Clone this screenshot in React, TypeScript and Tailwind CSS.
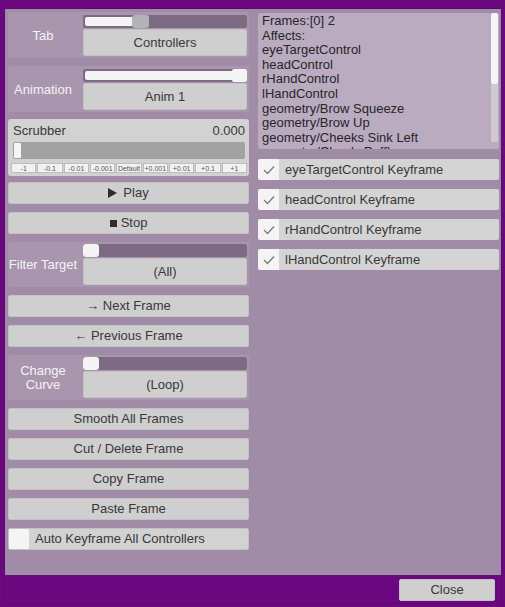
import type { ReactNode } from "react";

const font = "font-['Liberation_Sans',Arial,sans-serif]";

function Btn({ children, className = "" }: { children: ReactNode; className?: string }) {
	return (
		<div
			className={`h-[22px] w-full flex items-center justify-center bg-[#cfcfcf] rounded-[2px] border border-[#c2c2c2] text-[13px] text-[#383838] ${className}`}
		>
			{children}
		</div>
	);
}

function Slider({ kind }: { kind: "mid" | "full" | "start" }) {
	return (
		<div className="h-[13px] w-full flex items-center bg-[#7d6b84] rounded-[2px]">
			{kind === "mid" && (
				<>
					<div className="ml-[2px] h-[9px] w-[47px] bg-[#f4f4f4] rounded-l-[2px]"></div>
					<div className="h-[13px] w-[17px] bg-[#b3b3b3] rounded-[3px]"></div>
				</>
			)}
			{kind === "full" && (
				<>
					<div className="ml-[2px] h-[9px] flex-1 bg-[#f4f4f4] rounded-l-[2px]"></div>
					<div className="h-[13px] w-[15px] bg-[#f4f4f4] rounded-[2px]"></div>
				</>
			)}
			{kind === "start" && <div className="h-[13px] w-[16px] bg-[#f4f4f4] rounded-[3px]"></div>}
		</div>
	);
}

function Group({ label, slider, value, tall = false }: { label: ReactNode; slider: "mid" | "full" | "start"; value: string; tall?: boolean }) {
	return (
		<div className={`w-full flex items-center bg-[#a995ae] rounded-[2px] ${tall ? "h-[46px] pt-[1px]" : "h-[45px]"}`}>
			<div className="w-[70px] text-center text-[13px] leading-[14px] text-[#f4f4f4]">{label}</div>
			<div className="ml-[5px] w-[164px] flex flex-col">
				<Slider kind={slider} />
				<div className="mt-[1px] h-[27px] flex items-center justify-center bg-[#cfcfcf] rounded-[2px] border border-[#c2c2c2] text-[13px] text-[#383838]">
					{value}
				</div>
			</div>
		</div>
	);
}

function Check({ checked, label }: { checked: boolean; label: string }) {
	return (
		<div className="h-[21px] w-full flex rounded-[2px] overflow-hidden">
			<div className="w-[21px] h-full bg-[#f4f4f4] flex items-center justify-center">
				{checked && (
					<svg width="12" height="10" viewBox="0 0 12 10">
						<polyline points="1,5 4.5,8.5 11,1.5" fill="none" stroke="#7a7a7a" strokeWidth="1.3" />
					</svg>
				)}
			</div>
			<div className="flex-1 bg-[#d4d4d4] flex items-center pl-[6px] text-[13px] text-[#383838]">{label}</div>
		</div>
	);
}

const steps = ["-1", "-0.1", "-0.01", "-0.001", "Default", "+0.001", "+0.01", "+0.1", "+1"];

const lines = [
	"Frames:[0] 2",
	"Affects:",
	"eyeTargetControl",
	"headControl",
	"rHandControl",
	"lHandControl",
	"geometry/Brow Squeeze",
	"geometry/Brow Up",
	"geometry/Cheeks Sink Left",
	"geometry/CheeksPuffLower",
];

export default function App() {
	return (
		<div className={`w-[505px] h-[607px] bg-[#6b0880] pt-[8px] pl-[4px] ${font}`}>
			<div className="w-[498px] h-[596px] border border-[#5c0871] flex flex-col">
				<div className="h-[566px] bg-[#a18ca8] flex pl-[3px] pt-[3px]">
					{/* Left column */}
					<div className="w-[241px] flex flex-col">
						<Group label="Tab" slider="mid" value="Controllers" tall />
						<div className="mt-[8px]">
							<Group label="Animation" slider="full" value="Anim 1" tall />
						</div>

						{/* Scrubber */}
						<div className="mt-[7px] h-[57px] bg-[#d2d2d2] rounded-[3px] pt-[2px] pl-[5px] pr-[4px] flex flex-col">
							<div className="h-[20px] flex items-center justify-between text-[13px] text-[#383838]">
								<span>Scrubber</span>
								<span>0.000</span>
							</div>
							<div className="mt-[1px] h-[17px] bg-[#a2a2a2] rounded-[2px] flex items-center pl-[1px]">
								<div className="w-[7px] h-[15px] bg-[#f6f6f6] rounded-[1px]"></div>
							</div>
							<div className="mt-[4px] -ml-[2px] -mr-[2px] h-[10px] flex gap-[1px]">
								{steps.map((s) => (
									<div
										key={s}
										className="flex-1 flex items-center justify-center bg-[#f2f2f2] border border-[#bdbdbd] text-[7px] leading-none text-[#555]"
									>
										{s}
									</div>
								))}
							</div>
						</div>

						<Btn className="mt-[6px] gap-[6px]">
							<svg width="9" height="10" viewBox="0 0 9 10">
								<polygon points="0,0 9,5 0,10" fill="#2e2e2e" />
							</svg>
							<span>Play</span>
						</Btn>
						<Btn className="mt-[8px] gap-[4px]">
							<svg width="7" height="7" viewBox="0 0 7 7">
								<rect width="7" height="7" fill="#2e2e2e" />
							</svg>
							<span>Stop</span>
						</Btn>

						<div className="mt-[8px]">
							<Group label="Filter Target" slider="start" value="(All)" />
						</div>
						<Btn className="mt-[8px]">→ Next Frame</Btn>
						<Btn className="mt-[8px]">← Previous Frame</Btn>
						<div className="mt-[8px]">
							<Group
								label={
									<>
										Change
										<br />
										Curve
									</>
								}
								slider="start"
								value="(Loop)"
							/>
						</div>
						<Btn className="mt-[8px]">Smooth All Frames</Btn>
						<Btn className="mt-[8px]">Cut / Delete Frame</Btn>
						<Btn className="mt-[8px]">Copy Frame</Btn>
						<Btn className="mt-[8px]">Paste Frame</Btn>
						<div className="mt-[8px] h-[22px] w-full flex rounded-[2px] overflow-hidden border border-[#c2c2c2]">
							<div className="w-[20px] h-full bg-[#f4f4f4]"></div>
							<div className="flex-1 bg-[#d2d2d2] flex items-center pl-[6px] text-[13px] text-[#383838]">
								Auto Keyframe All Controllers
							</div>
						</div>
					</div>

					{/* Right column */}
					<div className="ml-[9px] w-[241px] flex flex-col">
						<div className="mt-[1px] h-[136px] bg-[#baabc1] rounded-[2px] flex overflow-hidden">
							<div className="flex-1 pl-[4px] pt-[1px] text-[13px] leading-[14.6px] text-[#262626] overflow-hidden">
								{lines.map((l) => (
									<div key={l} className="whitespace-nowrap">
										{l}
									</div>
								))}
							</div>
							<div className="w-[7px] mr-[1px] pb-[7px] flex flex-col">
								<div className="h-[71px] bg-[#f6f6f6] rounded-[2px]"></div>
								<div className="flex-1 bg-[#d0c9d3]"></div>
							</div>
						</div>
						<div className="mt-[10px] flex flex-col gap-[9px]">
							<Check checked label="eyeTargetControl Keyframe" />
							<Check checked label="headControl Keyframe" />
							<Check checked label="rHandControl Keyframe" />
							<Check checked label="lHandControl Keyframe" />
						</div>
					</div>
				</div>

				<div className="flex justify-end pr-[6px] pt-[4px]">
					<div className="w-[96px] h-[22px] flex items-center justify-center bg-[#cfcfcf] rounded-[2px] border border-[#c2c2c2] text-[13px] text-[#383838]">
						Close
					</div>
				</div>
			</div>
		</div>
	);
}
